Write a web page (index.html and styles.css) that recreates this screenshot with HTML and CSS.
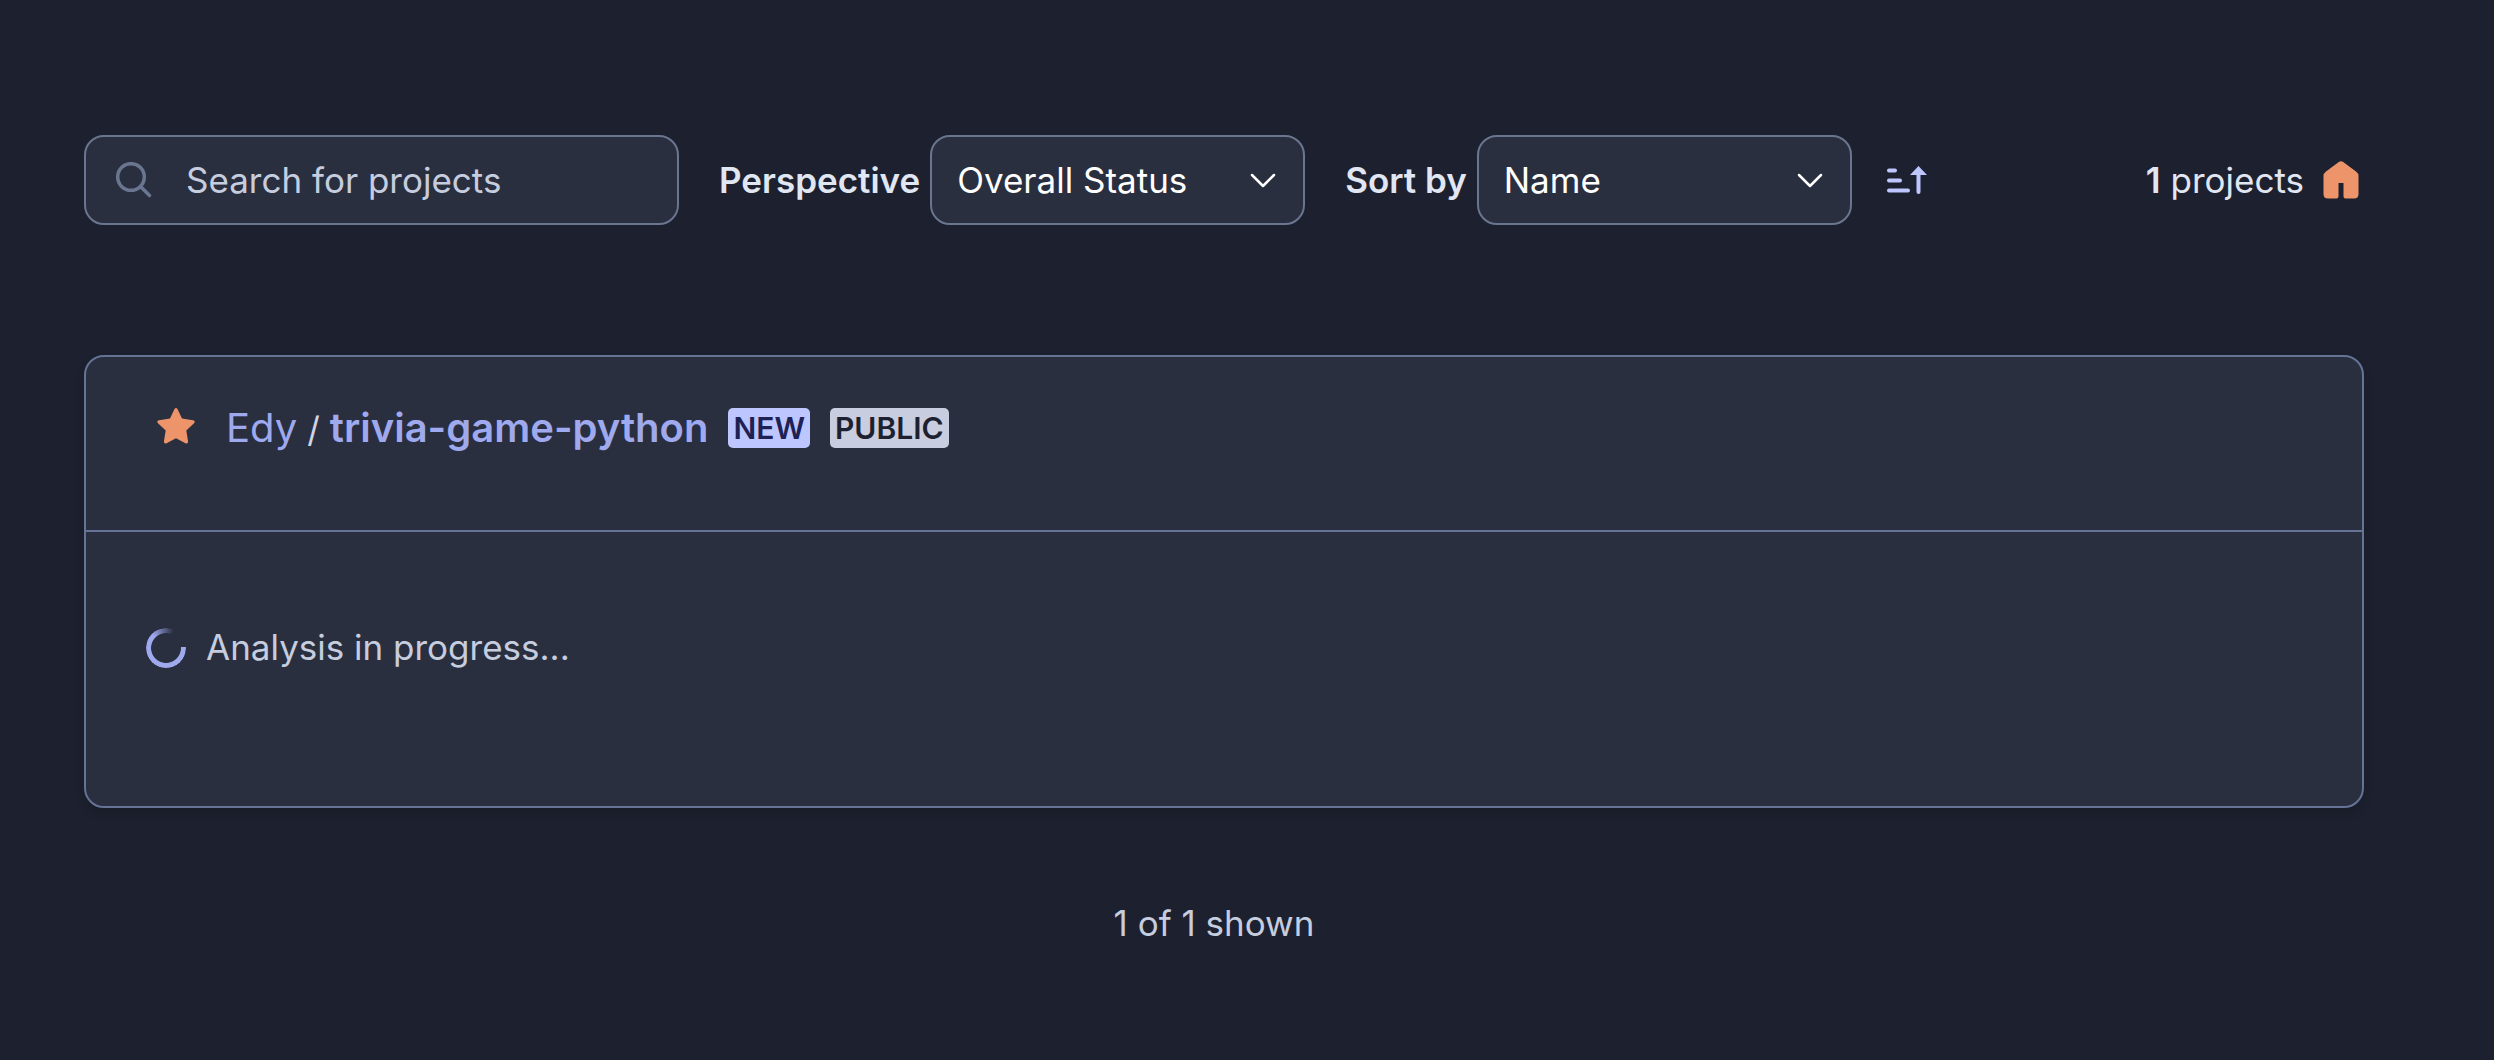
FILE: index.html
```html
<!DOCTYPE html>
<html lang="en">
<head>
<meta charset="utf-8">
<title>Projects</title>
<link rel="stylesheet" href="styles.css">
</head>
<body>
<main class="page">
  <header class="toolbar">
    <div class="search">
      <svg class="search-icon" width="36" height="36" viewBox="0 0 36 36"><circle cx="15" cy="15" r="13.3"/><path d="M24.5 24.5L33.5 33.5"/></svg>
      <span>Search for projects</span>
    </div>
    <div class="field">
      <span class="label">Perspective</span>
      <div class="select"><span>Overall Status</span><svg class="chevron" width="26" height="16" viewBox="0 0 26 16"><path d="M2 2L13 13L24 2"/></svg></div>
    </div>
    <div class="field">
      <span class="label">Sort by</span>
      <div class="select"><span>Name</span><svg class="chevron" width="26" height="16" viewBox="0 0 26 16"><path d="M2 2L13 13L24 2"/></svg></div>
    </div>
    <svg class="sort-icon" width="40" height="28" viewBox="0 0 40 28"><path class="bars" d="M2 4.5H8M2 14.5H13M2 24.5H21"/><path class="bars" d="M31.5 8V26"/><path d="M31.5 0L40 9H23Z"/></svg>
    <div class="count"><span><b>1</b> projects</span>
      <svg class="home-icon" width="36" height="38" viewBox="0 0 36 38"><path d="M15.8 1Q18 -0.5 20.2 1L33 10.5Q35.5 12.3 35.5 15V33Q35.5 37.5 31 37.5H22.5Q20.5 37.5 20.5 35.5V22H15.5V35.5Q15.5 37.5 13.5 37.5H5Q.5 37.5 .5 33V15Q.5 12.3 3 10.5Z"/></svg>
    </div>
  </header>
  <section class="card">
    <div class="card-head">
      <svg class="star" width="38" height="36" viewBox="0 0 38 36"><path d="M17.4 1.2Q19 -1 20.6 1.2L25 10.5L36 12.2Q38.8 13 37 15.2L29.3 22.6L31.1 33.4Q31 36.3 28.4 35.3L19 30.2L9.6 35.3Q7 36.3 6.9 33.4L8.7 22.6L1 15.2Q-.8 13 2 12.2L13 10.5Z"/></svg>
      <h2 class="title"><span class="org">Edy</span><span class="slash">/</span><span class="repo">trivia-game-python</span></h2>
      <span class="badge new">NEW</span>
      <span class="badge public">PUBLIC</span>
    </div>
    <div class="card-body"><span class="spinner"></span><span>Analysis in progress...</span></div>
  </section>
  <footer class="shown">1 of 1 shown</footer>
</main>
</body>
</html>
```
FILE: styles.css
```css
* { box-sizing: border-box; }
body {
  margin: 0;
  background: #1d212f;
  color: #e1e6f3;
  font: 400 35px/50px Inter, "Liberation Sans", sans-serif;
}
svg { display: block; flex: none; }
.page {
  height: 1060px;
  padding: 135px 130px 0 84px;
  overflow: hidden;
}
.toolbar { display: flex; align-items: center; height: 90px; white-space: nowrap; }
.search {
  display: flex;
  align-items: center;
  gap: 34px;
  width: 595px;
  height: 90px;
  margin-right: 40px;
  padding-left: 30px;
  border: 2px solid #6a7590;
  border-radius: 20px;
  background: #2a2f40;
  color: #c5cddf;
}
.search-icon { fill: none; stroke: #6a7590; stroke-width: 3.5; stroke-linecap: round; }
.field { display: flex; align-items: center; gap: 10px; margin-right: 40px; }
.label { font-weight: 600; }
.select {
  display: flex;
  align-items: center;
  justify-content: space-between;
  width: 375px;
  height: 90px;
  padding: 0 27px 0 25px;
  border: 2px solid #6a7590;
  border-radius: 20px;
  background: #2a2f40;
  color: #fff;
}
.chevron { margin-top: 1px; fill: none; stroke: #fff; stroke-width: 2.5; stroke-linecap: round; stroke-linejoin: round; }
.sort-icon { margin-left: -5px; fill: #bdc6ff; }
.bars { stroke: #bdc6ff; stroke-width: 4; stroke-linecap: round; }
.count { display: flex; align-items: center; gap: 19px; margin-left: auto; margin-right: 5px; }
.count b { font-weight: 600; }
.home-icon { margin-bottom: 1px; fill: #ee946a; }
.card {
  height: 453px;
  margin-top: 130px;
  border: 2px solid #647396;
  border-radius: 20px;
  background: #2a2f40;
  box-shadow: 0 5px 10px rgba(0, 0, 0, .16);
}
.card-head {
  display: flex;
  align-items: flex-start;
  height: 175px;
  padding: 51px 0 0 71px;
  border-bottom: 2px solid #647396;
}
.star { fill: #ee946a; }
.title { display: flex; margin: -5px 20px 0 31px; font-size: 40px; line-height: 50px; font-weight: 400; color: #9fa9ed; }
.slash { margin: 1px 10px 0 10px; font-size: 35px; color: #d0d5e3; }
.repo { font-weight: 600; }
.badge {
  height: 40px;
  margin-right: 20px;
  padding: 0 5px;
  border-radius: 5px;
  font-size: 30px;
  line-height: 40px;
  font-weight: 600;
}
.new { background: #bdc6ff; color: #1d2255; }
.public { background: #c8cddf; color: #1d212f; }
.card-body { display: flex; align-items: flex-start; gap: 20px; padding: 96px 0 0 60px; line-height: 38px; color: #c5cddf; }
.spinner {
  width: 40px;
  height: 40px;
  border-radius: 50%;
  background: conic-gradient(from 25deg, transparent 0 61deg, #9fa9ed 61deg 290deg, #9fa9ed00 360deg);
  mask: radial-gradient(circle, transparent 14.5px, #000 15.3px);
}
.shown { margin-top: 90px; padding-right: 20px; text-align: center; color: #c5cddf; }
```
